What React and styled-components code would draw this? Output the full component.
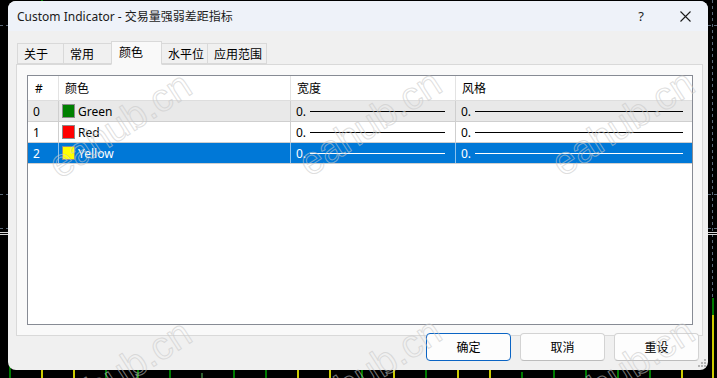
import React from 'react';
import styled, { createGlobalStyle } from 'styled-components';

const GlobalStyle = createGlobalStyle`
  html, body {
    margin: 0;
    padding: 0;
    background: #000;
  }
  body {
    font-family: "Noto Sans", "Noto Sans CJK SC", sans-serif;
  }
`;

const Screen = styled.div`
  position: relative;
  width: 717px;
  height: 378px;
  overflow: hidden;
  background: #000;
`;

const Chart = styled.svg`
  position: absolute;
  left: 0;
  top: 0;
`;

const Dialog = styled.div`
  position: absolute;
  left: 8px;
  top: 1px;
  width: 700px;
  height: 369px;
  display: flex;
  flex-direction: column;
  background: #f0f0f0;
  border-radius: 8px;
  overflow: hidden;
  font-size: 12px;
  color: #000;
`;

const TitleBar = styled.div`
  flex: none;
  height: 30px;
  display: flex;
  align-items: center;
  padding-left: 9px;
  background: #eef2f9;
`;

const Caption = styled.div`
  flex: 1;
  font-size: 12px;
  color: #1b1b1b;
  white-space: nowrap;
`;

const CaptionButton = styled.div`
  width: 46px;
  height: 30px;
  display: flex;
  align-items: center;
  justify-content: center;
  padding-left: ${p => p.$shift || 0}px;
  box-sizing: border-box;
  font-size: 13px;
  color: #1b1b1b;
`;

const Body = styled.div`
  flex: 1;
  display: flex;
  flex-direction: column;
  padding: 10px 5px 9px 8px;
`;

const TabStrip = styled.div`
  display: flex;
  align-items: flex-end;
  height: 23px;
  margin-left: 1px;
  position: relative;
  z-index: 1;
`;

const Tab = styled.div`
  box-sizing: border-box;
  width: ${p => p.$w}px;
  height: ${p => (p.$active ? 24 : 21)}px;
  margin-bottom: ${p => (p.$active ? -1 : 0)}px;
  margin-left: -1px;
  display: flex;
  align-items: center;
  padding: ${p => (p.$active ? '0 0 2px 7px' : '0 0 0 6px')};
  background: ${p => (p.$active ? '#f9f9f9' : '#f0f0f0')};
  border: 1px solid #d9d9d9;
  border-bottom-color: ${p => (p.$active ? '#f9f9f9' : '#d9d9d9')};
  white-space: nowrap;
  &:first-child {
    margin-left: 0;
  }
`;

const Panel = styled.div`
  box-sizing: border-box;
  width: 687px;
  height: 272px;
  display: flex;
  padding: 10px 9px 10px 10px;
  background: #f9f9f9;
  border: 1px solid #d9d9d9;
`;

const List = styled.div`
  flex: 1;
  display: flex;
  flex-direction: column;
  background: #fff;
  border: 1px solid #878b94;
`;

const Row = styled.div`
  display: grid;
  grid-template-columns: 31px 232px 165px 1fr;
  height: ${p => (p.$header ? 24 : 20)}px;
  background: ${p => p.$bg || '#fff'};
  color: ${p => (p.$selected ? '#fff' : '#000')};
  border-bottom: 1px solid ${p => (p.$header ? '#dedede' : '#cfcfcf')};
`;

const Cell = styled.div`
  display: flex;
  align-items: center;
  min-width: 0;
  padding: 0 ${p => p.$pr || 0}px 0 ${p => p.$pl || 5}px;
  border-right: 1px solid ${p => p.$line || 'transparent'};
  white-space: nowrap;
  overflow: hidden;
`;

const Swatch = styled.span`
  flex: none;
  width: 11px;
  height: 12px;
  margin-right: 3px;
  background: ${p => p.$color};
  border: 1px solid #8c8c8c;
`;

const Sample = styled.span`
  flex: 1;
  height: 1px;
  margin-left: 4px;
  background: ${p => (p.$selected ? '#fff' : '#000')};
`;

const Footer = styled.div`
  display: flex;
  justify-content: flex-end;
  gap: 9px;
  margin-top: -3px;
  padding-right: 4px;
  position: relative;
`;

const Button = styled.div`
  box-sizing: border-box;
  width: 85px;
  height: 28px;
  display: flex;
  align-items: center;
  justify-content: center;
  background: #fdfdfd;
  border: 1px solid ${p => (p.$primary ? '#0a64c4' : '#d3d3d3')};
  border-bottom-color: ${p => (p.$primary ? '#0a64c4' : '#bdbdbd')};
  border-radius: 4px;
  font-size: 12px;
`;

const Grip = styled.svg`
  position: absolute;
  right: 1px;
  bottom: 2px;
`;

const Watermarks = styled.div`
  position: absolute;
  left: 0;
  top: 0;
  width: 717px;
  height: 378px;
  pointer-events: none;
  overflow: hidden;
`;

const Mark = styled.span`
  position: absolute;
  left: ${p => p.$x}px;
  top: ${p => p.$y}px;
  transform: translate(-50%, -50%) rotate(-33deg);
  font-family: "Liberation Sans", sans-serif;
  font-size: 39px;
  color: transparent;
  -webkit-text-stroke: 1px rgba(200, 200, 200, 0.6);
  white-space: nowrap;
`;

const tabs = [
  { label: '关于', w: 47 },
  { label: '常用', w: 49 },
  { label: '颜色', w: 51, active: true },
  { label: '水平位', w: 47 },
  { label: '应用范围', w: 60 },
];

const rows = [
  { n: 0, name: 'Green', color: '#008000', bg: '#e9e9e9' },
  { n: 1, name: 'Red', color: '#ff0000', bg: '#fff' },
  { n: 2, name: 'Yellow', color: '#ffff00', bg: '#0078d7', selected: true },
];

const bars = [
  [9, 'g', 366], [41, 'y', 370], [73, 'y', 370], [105, 'g', 370], [137, 'g', 370],
  [169, 'g', 370], [201, 'd', 373], [233, 'g', 370], [265, 'g', 370], [297, 'y', 370],
  [329, 'y', 370], [361, 'g', 370], [393, 'y', 370], [425, 'g', 370], [457, 'y', 370],
  [489, 'y', 370], [521, 'g', 372], [553, 'g', 370], [585, 'g', 370], [617, 'g', 370],
  [649, 'g', 370], [681, 'y', 370],
];

const barColor = { g: '#007a00', y: '#cccc00', d: '#2f5f2f' };

const marks = [
  [120, 125], [370, 123], [623, 123],
  [120, 373], [370, 371], [623, 371],
];

function ChartBackdrop() {
  return (
    <Chart width="717" height="378" viewBox="0 0 717 378">
      <rect width="717" height="378" fill="#000" />
      <g stroke="#5a6878" strokeWidth="1" strokeDasharray="3 3">
        <line x1="0" y1="25.5" x2="717" y2="25.5" />
        <line x1="0" y1="194.5" x2="717" y2="194.5" />
        <line x1="0" y1="228.5" x2="717" y2="228.5" />
        <line x1="712.5" y1="0" x2="712.5" y2="298" />
      </g>
      <g stroke="#d8d8d8" strokeWidth="1">
        <line x1="0" y1="232.5" x2="717" y2="232.5" />
        <line x1="0" y1="234.5" x2="717" y2="234.5" />
      </g>
      {bars.map(([x, c, top]) => (
        <rect key={x} x={x} y={top} width="2" height={378 - top} fill={barColor[c]} />
      ))}
      <rect x="41" y="0" width="2" height="2" fill="#007a00" />
      <rect x="712" y="298" width="2" height="17" fill="#007a00" />
      <rect x="712" y="315" width="2" height="63" fill="#cccc00" />
    </Chart>
  );
}

export default function App() {
  return (
    <Screen>
      <GlobalStyle />
      <ChartBackdrop />
      <Dialog>
        <TitleBar>
          <Caption>Custom Indicator - 交易量强弱差距指标</Caption>
          <CaptionButton $shift={4}>?</CaptionButton>
          <CaptionButton>
            <svg width="11" height="11" viewBox="0 0 11 11">
              <path d="M0.5 0.5 L10.5 10.5 M10.5 0.5 L0.5 10.5" stroke="#1b1b1b" strokeWidth="1.1" fill="none" />
            </svg>
          </CaptionButton>
        </TitleBar>
        <Body>
          <TabStrip>
            {tabs.map(t => (
              <Tab key={t.label} $w={t.w} $active={t.active}>{t.label}</Tab>
            ))}
          </TabStrip>
          <Panel>
            <List>
              <Row $header>
                <Cell $pl={7} $line="#e3e3e3">#</Cell>
                <Cell $pl={6} $line="#e3e3e3">颜色</Cell>
                <Cell $pl={6} $line="#e3e3e3">宽度</Cell>
                <Cell $pl={6}>风格</Cell>
              </Row>
              {rows.map(r => {
                const line = r.selected ? 'rgba(255,255,255,0.55)' : '#cfcfcf';
                return (
                  <Row key={r.n} $bg={r.bg} $selected={r.selected}>
                    <Cell $pl={5} $line={line}>{r.n}</Cell>
                    <Cell $pl={3} $line={line}>
                      <Swatch $color={r.color} />
                      {r.name}
                    </Cell>
                    <Cell $pl={5} $pr={10} $line={line}>
                      0.<Sample $selected={r.selected} />
                    </Cell>
                    <Cell $pl={5} $pr={8}>
                      0.<Sample $selected={r.selected} />
                    </Cell>
                  </Row>
                );
              })}
            </List>
          </Panel>
          <Footer>
            <Button $primary>确定</Button>
            <Button>取消</Button>
            <Button>重设</Button>
          </Footer>
        </Body>
        <Grip width="9" height="9" viewBox="0 0 9 9">
          <g fill="#b4b4b4">
            <rect x="6" y="0" width="2" height="2" />
            <rect x="3" y="3" width="2" height="2" />
            <rect x="6" y="3" width="2" height="2" />
            <rect x="0" y="6" width="2" height="2" />
            <rect x="3" y="6" width="2" height="2" />
            <rect x="6" y="6" width="2" height="2" />
          </g>
        </Grip>
      </Dialog>
      <Watermarks>
        {marks.map(([x, y]) => (
          <Mark key={`${x}-${y}`} $x={x} $y={y}>eahub.cn</Mark>
        ))}
      </Watermarks>
    </Screen>
  );
}
